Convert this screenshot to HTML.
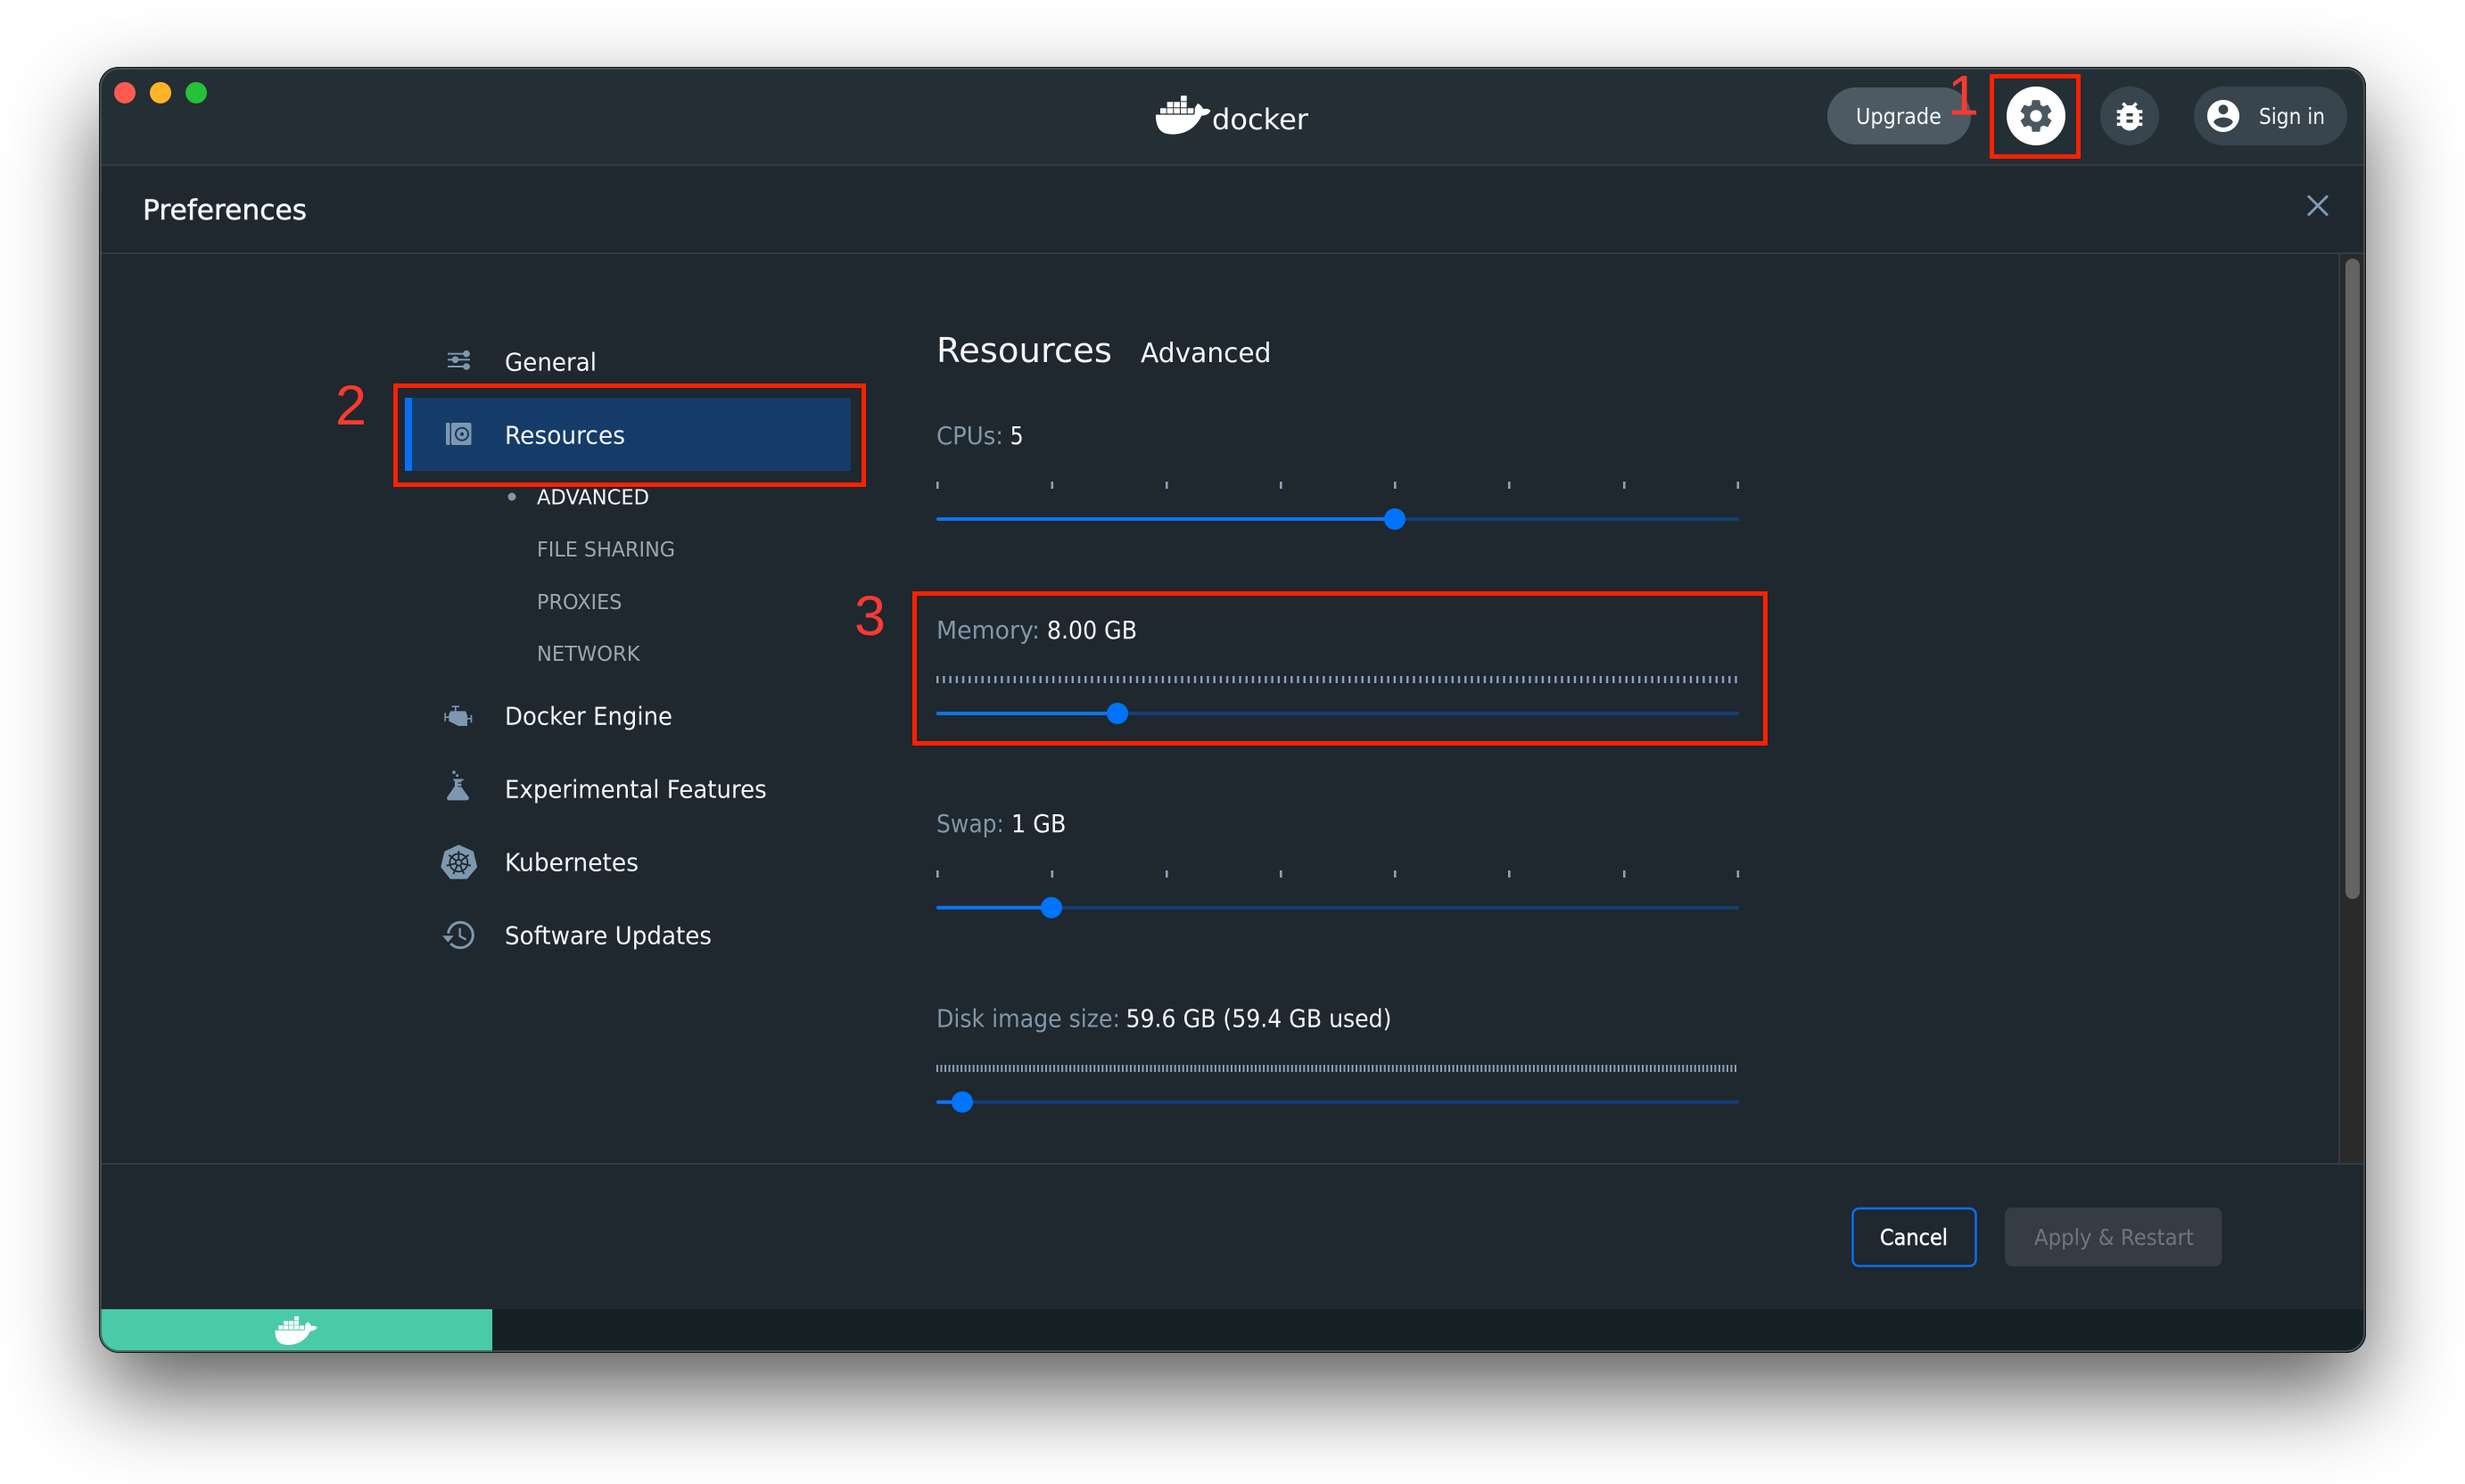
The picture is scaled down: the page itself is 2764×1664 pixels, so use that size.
<!DOCTYPE html>
<html>
<head>
<meta charset="utf-8">
<style>
html,body{margin:0;padding:0;width:2764px;height:1664px;overflow:hidden;background:#fff}
#shadow{position:absolute;left:111px;top:75px;width:2542px;height:1442px;border-radius:22px;box-shadow:0 44px 100px rgba(0,0,0,.64)}
svg{position:absolute;left:0;top:0}
text{font-family:"DejaVu Sans","Liberation Sans",sans-serif;fill:#f4f6f8}
.nav{font-size:27.5px}
.sub{font-size:23.5px;fill:#9ea6ac}
.lab{font-size:27.5px;fill:#7d93a6}
.red{font-family:"Liberation Sans",sans-serif;fill:#fb3a30;font-size:63px}
</style>
</head>
<body>
<div id="shadow"></div>
<svg width="2764" height="1664" viewBox="0 0 2764 1664" xmlns="http://www.w3.org/2000/svg">
<defs>
<clipPath id="win"><rect x="111" y="75" width="2542" height="1442" rx="22"/></clipPath>
</defs>

<g clip-path="url(#win)">
  <rect x="111" y="75" width="2542" height="1442" fill="#1f272f"/>
  <rect x="111" y="75" width="2542" height="110" fill="#242e35"/>
  <rect x="111" y="184" width="2542" height="2" fill="#343d45"/>
  <rect x="111" y="283" width="2542" height="2" fill="#343b44"/>
  <!-- scrollbar -->
  <rect x="2622" y="285" width="31" height="1019" fill="#2a2a2b"/>
  <rect x="2622" y="285" width="2" height="1019" fill="#363a3e"/>
  <rect x="2630" y="290" width="16" height="718" rx="8" fill="#636363"/>
  <!-- footer -->
  <rect x="111" y="1304" width="2542" height="2" fill="#343b44"/>
  <rect x="111" y="1306" width="2542" height="162" fill="#1f272f"/>
  <rect x="111" y="1468" width="2542" height="49" fill="#152025"/>
  <rect x="111" y="1468" width="441" height="49" fill="#49cba8"/>
</g>
<rect x="111.5" y="75.5" width="2541" height="1441" rx="22" fill="none" stroke="#15181b" stroke-width="1"/>
<rect x="113" y="77" width="2538" height="1438" rx="20.5" fill="none" stroke="#4c545b" stroke-width="2" opacity=".8"/>

<!-- traffic lights -->
<circle cx="140" cy="104" r="12" fill="#ff5a52"/>
<circle cx="180" cy="104" r="12" fill="#ffb429"/>
<circle cx="220" cy="104" r="12" fill="#25c13a"/>

<!-- docker logo -->
<g transform="translate(1200 50) scale(.3333)" fill="#fff">
  <rect x="372" y="172" width="20" height="18"/>
  <rect x="326" y="193" width="20" height="18"/><rect x="349" y="193" width="20" height="18"/><rect x="372" y="193" width="20" height="18"/>
  <rect x="303" y="214" width="20" height="18"/><rect x="326" y="214" width="20" height="18"/><rect x="349" y="214" width="20" height="18"/><rect x="372" y="214" width="20" height="18"/><rect x="395" y="214" width="20" height="18"/>
  <path d="M288 236H415C419 236 420 228 419 220C419 212 424 204 430 198C438 202 445 210 447 217C456 214 466 216 472 222C468 233 457 239 442 239C428 272 395 302 345 302C305 302 288 282 288 236Z"/>
</g>
<text x="1359" y="145" font-size="32" textLength="108" lengthAdjust="spacingAndGlyphs" style="fill:#fff;font-family:'DejaVu Sans',sans-serif">docker</text>

<!-- header buttons -->
<rect x="2049" y="98" width="161" height="64" rx="32" fill="#4d5a63"/>
<text x="2081" y="139" font-size="25" textLength="96" lengthAdjust="spacingAndGlyphs">Upgrade</text>
<circle cx="2283" cy="130" r="33" fill="#fff"/>
<g transform="translate(2283 130) scale(1.85) translate(-12 -12)"><path fill="#4a5761" d="M19.14 12.94c.04-.3.06-.61.06-.94 0-.32-.02-.64-.07-.94l2.03-1.58c.18-.14.23-.41.12-.61l-1.92-3.32c-.12-.22-.37-.29-.59-.22l-2.39.96c-.5-.38-1.03-.7-1.62-.94l-.36-2.54c-.04-.24-.24-.41-.48-.41h-3.84c-.24 0-.43.17-.47.41l-.36 2.54c-.59.24-1.13.57-1.62.94l-2.39-.96c-.22-.08-.47 0-.59.22L2.74 8.87c-.12.21-.08.47.12.61l2.03 1.58c-.05.3-.09.63-.09.94s.02.64.07.94l-2.03 1.58c-.18.14-.23.41-.12.61l1.92 3.32c.12.22.37.29.59.22l2.39-.96c.5.38 1.03.7 1.62.94l.36 2.54c.05.24.24.41.48.41h3.84c.24 0 .44-.17.47-.41l.36-2.54c.59-.24 1.13-.56 1.62-.94l2.39.96c.22.08.47 0 .59-.22l1.92-3.32c.12-.22.07-.47-.12-.61l-2.01-1.58zM12 15.6c-1.98 0-3.6-1.62-3.6-3.6s1.62-3.6 3.6-3.6 3.6 1.62 3.6 3.6-1.62 3.6-3.6 3.6z"/></g>
<circle cx="2388" cy="130" r="33" fill="#38454e"/>
<g transform="translate(2388 130.5) scale(1.78) translate(-12 -12)"><path fill="#fff" d="M20 8h-2.81c-.45-.78-1.07-1.45-1.82-1.96L17 4.41 15.59 3l-2.17 2.17C12.96 5.06 12.49 5 12 5c-.49 0-.96.06-1.41.17L8.41 3 7 4.41l1.62 1.63C7.88 6.55 7.26 7.22 6.81 8H4v2h2.09c-.05.33-.09.66-.09 1v1H4v2h2v1c0 .34.04.67.09 1H4v2h2.81c1.04 1.79 2.97 3 5.19 3s4.15-1.21 5.19-3H20v-2h-2.09c.05-.33.09-.66.09-1v-1h2v-2h-2v-1c0-.34-.04-.67-.09-1H20V8zm-6 8h-4v-2h4v2zm0-4h-4v-2h4v2z"/></g>
<rect x="2460" y="97" width="172" height="66" rx="33" fill="#38454e"/>
<g transform="translate(2493 130) scale(1.8) translate(-12 -12)"><path fill="#fff" d="M12 2C6.48 2 2 6.48 2 12s4.48 10 10 10 10-4.48 10-10S17.52 2 12 2zm0 3c1.66 0 3 1.34 3 3s-1.34 3-3 3-3-1.34-3-3 1.34-3 3-3zm0 14.2c-2.5 0-4.71-1.28-6-3.22.03-1.99 4-3.08 6-3.08 1.99 0 5.97 1.09 6 3.08-1.29 1.94-3.5 3.22-6 3.22z"/></g>
<text x="2533" y="139" font-size="25" textLength="74" lengthAdjust="spacingAndGlyphs">Sign in</text>

<!-- Preferences header -->
<text x="160" y="246" font-size="31.5" textLength="184" lengthAdjust="spacingAndGlyphs" stroke="#f4f6f8" stroke-width=".5">Preferences</text>
<path d="M2588 219.5L2610 241.5M2610 219.5L2588 241.5" stroke="#7f9ab0" stroke-width="3" fill="none"/>

<!-- sidebar -->
<g fill="#7d98ae" stroke="none">
  <rect x="502" y="395.7" width="25" height="2"/><rect x="502" y="402.3" width="25" height="2"/><rect x="502" y="410" width="25" height="2"/>
  <circle cx="523" cy="396.7" r="3.8"/><circle cx="510.5" cy="403.3" r="3.8"/><circle cx="523" cy="411" r="3.8"/>
</g>
<text class="nav" x="566" y="415.7" textLength="103" lengthAdjust="spacingAndGlyphs">General</text>

<rect x="454" y="446" width="500" height="82" fill="#153b69"/>
<rect x="454" y="446" width="8" height="82" fill="#0a6ff0"/>
<rect x="500" y="474" width="4.5" height="25" rx="1.5" fill="#7d98ae"/>
<rect x="506" y="474" width="22.5" height="25" rx="2" fill="#7d98ae"/>
<circle cx="518" cy="486.7" r="7" fill="none" stroke="#153b69" stroke-width="2"/>
<circle cx="518" cy="486.7" r="2" fill="#153b69"/>
<text class="nav" x="566" y="497.7" textLength="135" lengthAdjust="spacingAndGlyphs">Resources</text>

<circle cx="574" cy="557" r="4.5" fill="#7d98ae"/>
<text class="sub" x="602" y="565.7" textLength="126" lengthAdjust="spacingAndGlyphs" style="fill:#f4f6f8">ADVANCED</text>
<text class="sub" x="602" y="624" textLength="155" lengthAdjust="spacingAndGlyphs">FILE SHARING</text>
<text class="sub" x="602" y="683" textLength="95.5" lengthAdjust="spacingAndGlyphs">PROXIES</text>
<text class="sub" x="602" y="741" textLength="115.5" lengthAdjust="spacingAndGlyphs">NETWORK</text>

<!-- docker engine icon -->
<g transform="translate(460 760) scale(.3333)" fill="#7d98ae">
  <rect x="140" y="94" width="25" height="5"/><rect x="150" y="96" width="5" height="18"/>
  <path d="M135 112H186L192 126V162H162L130 146V124Z"/>
  <rect x="117" y="130" width="14" height="5"/><rect x="115" y="118" width="5" height="28"/>
  <rect x="192" y="135" width="14" height="5"/><rect x="203" y="125" width="5" height="26"/>
</g>
<text class="nav" x="566" y="812.7" textLength="188" lengthAdjust="spacingAndGlyphs">Docker Engine</text>

<!-- flask icon -->
<g transform="translate(460 760) scale(.3333)" fill="#7d98ae">
  <circle cx="147" cy="318" r="5.5"/><circle cx="158" cy="329" r="4.5"/>
  <path d="M145 340H179V346H172V352H160V356H172V364H160V367H172L197 402C199 408 195 412 190 412H131C125 412 122 408 124 402L150 364V346H145Z"/>
</g>
<text class="nav" x="566" y="894.7" textLength="293.7" lengthAdjust="spacingAndGlyphs">Experimental Features</text>

<!-- kubernetes icon -->
<g transform="translate(460 760) scale(.3333)">
  <path fill="#7d98ae" stroke="#7d98ae" stroke-width="6" stroke-linejoin="round" d="M163 565L210 586L222 636L190 674L136 674L106 636L118 586Z"/>
  <g fill="none" stroke="#1f272f" stroke-width="5.5">
    <circle cx="163" cy="622" r="30"/>
    <circle cx="163" cy="622" r="10"/>
    <path d="M163 582V611M196 596L172 615M204 632L174 625M181 660L168 632M145 660L158 632M122 632L152 625M130 596L154 615"/>
  </g>
</g>
<text class="nav" x="566" y="976.7" textLength="150" lengthAdjust="spacingAndGlyphs">Kubernetes</text>

<!-- updates icon -->
<g transform="translate(460 760) scale(.3333)">
  <path fill="none" stroke="#7d98ae" stroke-width="9" d="M128 860C131 838 148 823 168 823C192 823 211 842 211 866C211 889 192 908 168 908C155 908 144 902 136 894"/>
  <path fill="#7d98ae" d="M108 868H146L127 890Z"/>
  <path fill="none" stroke="#7d98ae" stroke-width="7" d="M167 842V869L188 881"/>
</g>
<text class="nav" x="566" y="1058.7" textLength="232" lengthAdjust="spacingAndGlyphs">Software Updates</text>

<!-- content headings -->
<text x="1050" y="406" font-size="38" textLength="197" lengthAdjust="spacingAndGlyphs">Resources</text>
<text x="1279" y="406" font-size="30" textLength="146.5" lengthAdjust="spacingAndGlyphs">Advanced</text>

<!-- CPUs -->
<text class="lab" x="1050" y="498" textLength="75" lengthAdjust="spacingAndGlyphs" style="fill:#8197a9">CPUs:</text>
<text class="nav" x="1132.6" y="498" textLength="15" lengthAdjust="spacingAndGlyphs">5</text>
<g fill="#8aa2b8">
<rect x="1050" y="540" width="2.6" height="8"/><rect x="1178.5" y="540" width="2.6" height="8"/><rect x="1307" y="540" width="2.6" height="8"/><rect x="1435" y="540" width="2.6" height="8"/><rect x="1563" y="540" width="2.6" height="8"/><rect x="1691" y="540" width="2.6" height="8"/><rect x="1820" y="540" width="2.6" height="8"/><rect x="1947.5" y="540" width="2.6" height="8"/>
</g>
<rect x="1050" y="580" width="900" height="4" rx="2" fill="#133f77"/>
<rect x="1050" y="580" width="514" height="4" rx="2" fill="#0a74f5"/>
<circle cx="1564" cy="582" r="12" fill="#0073ff"/>

<!-- Memory -->
<text class="lab" x="1050" y="716" textLength="116" lengthAdjust="spacingAndGlyphs" style="fill:#8197a9">Memory:</text>
<text class="nav" x="1174" y="716" textLength="101" lengthAdjust="spacingAndGlyphs">8.00 GB</text>
<line x1="1050" y1="762" x2="1950" y2="762" stroke="#8aa2b8" stroke-width="8" stroke-dasharray="2.4 4.82"/>
<rect x="1050" y="798" width="900" height="4" rx="2" fill="#133f77"/>
<rect x="1050" y="798" width="203" height="4" rx="2" fill="#0a74f5"/>
<circle cx="1253" cy="800" r="12" fill="#0073ff"/>

<!-- Swap -->
<text class="lab" x="1050" y="933" textLength="76" lengthAdjust="spacingAndGlyphs" style="fill:#8197a9">Swap:</text>
<text class="nav" x="1134" y="933" textLength="61.5" lengthAdjust="spacingAndGlyphs">1 GB</text>
<g fill="#8aa2b8">
<rect x="1050" y="976" width="2.6" height="8"/><rect x="1178.5" y="976" width="2.6" height="8"/><rect x="1307" y="976" width="2.6" height="8"/><rect x="1435" y="976" width="2.6" height="8"/><rect x="1563" y="976" width="2.6" height="8"/><rect x="1691" y="976" width="2.6" height="8"/><rect x="1820" y="976" width="2.6" height="8"/><rect x="1947.5" y="976" width="2.6" height="8"/>
</g>
<rect x="1050" y="1015.7" width="900" height="4" rx="2" fill="#133f77"/>
<rect x="1050" y="1015.7" width="129" height="4" rx="2" fill="#0a74f5"/>
<circle cx="1179" cy="1017.7" r="12" fill="#0073ff"/>

<!-- Disk -->
<text class="lab" x="1050" y="1151.7" textLength="206" lengthAdjust="spacingAndGlyphs" style="fill:#8197a9">Disk image size:</text>
<text class="nav" x="1262.5" y="1151.7" textLength="298" lengthAdjust="spacingAndGlyphs">59.6 GB (59.4 GB used)</text>
<line x1="1050" y1="1198" x2="1949" y2="1198" stroke="#8aa2b8" stroke-width="8" stroke-dasharray="2 2.52"/>
<rect x="1050" y="1233.7" width="900" height="4" rx="2" fill="#133f77"/>
<rect x="1050" y="1233.7" width="29" height="4" rx="2" fill="#0a74f5"/>
<circle cx="1079" cy="1235.7" r="12" fill="#0073ff"/>

<!-- footer buttons -->
<rect x="2077.5" y="1355" width="138" height="64.5" rx="7" fill="#1f272f" stroke="#0a6ff0" stroke-width="2.5"/>
<text x="2108" y="1396" font-size="25" textLength="76" lengthAdjust="spacingAndGlyphs" stroke="#f4f6f8" stroke-width=".4" style="fill:#fff">Cancel</text>
<rect x="2248" y="1354" width="243.5" height="66" rx="8" fill="#353c44"/>
<text x="2281" y="1396" font-size="25" textLength="179" lengthAdjust="spacingAndGlyphs" style="fill:#6f767b">Apply &amp; Restart</text>

<!-- bottom whale -->
<g transform="translate(308.5 1476) scale(.2555 .246) translate(-288 -172)" fill="#fff">
  <rect x="372" y="172" width="20" height="18"/>
  <rect x="326" y="193" width="20" height="18"/><rect x="349" y="193" width="20" height="18"/><rect x="372" y="193" width="20" height="18"/>
  <rect x="303" y="214" width="20" height="18"/><rect x="326" y="214" width="20" height="18"/><rect x="349" y="214" width="20" height="18"/><rect x="372" y="214" width="20" height="18"/><rect x="395" y="214" width="20" height="18"/>
  <path d="M288 236H415C419 236 420 228 419 220C419 212 424 204 430 198C438 202 445 210 447 217C456 214 466 216 472 222C468 233 457 239 442 239C428 272 395 302 345 302C305 302 288 282 288 236Z"/>
</g>

<!-- red annotations -->
<g fill="none" stroke="#fb2200" stroke-width="5">
  <rect x="2233.5" y="85.5" width="97" height="90"/>
  <rect x="443.5" y="432.5" width="525" height="111"/>
  <rect x="1025.5" y="665.5" width="954" height="168"/>
</g>
<text class="red" x="2184" y="128.5">1</text>
<text class="red" x="376" y="476">2</text>
<text class="red" x="958" y="712">3</text>
</svg>
</body>
</html>
